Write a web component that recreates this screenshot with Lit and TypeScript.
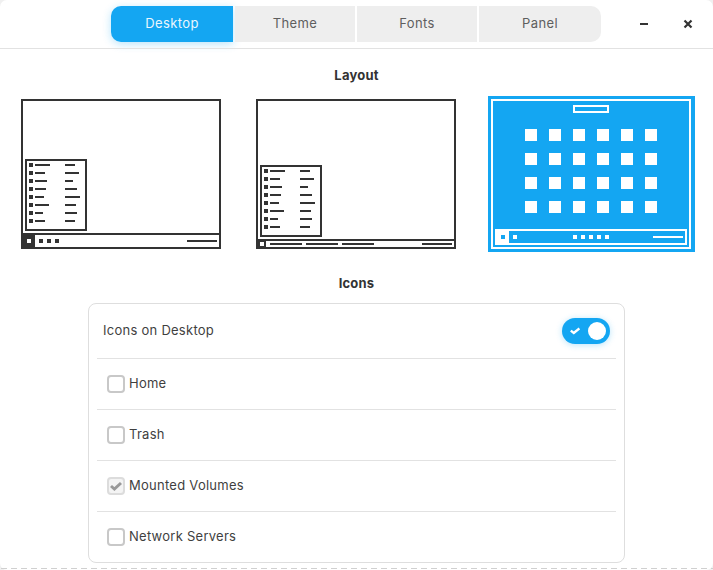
import { LitElement, html, css, svg } from "lit";
import { customElement } from "lit/decorators.js";

const W1 = [15, 10, 12, 11, 9, 14, 8, 10];
const W2 = [10, 14, 8, 12, 15, 11, 12, 10];

const menu = (x: number, y: number) => svg`
  <rect x=${x + 1} y=${y + 1} width="60" height="70" fill="none" stroke="#333" stroke-width="2"/>
  ${W1.map((w, i) => svg`
    <rect x=${x + 4} y=${y + 4 + i * 8} width="4" height="4" fill="#333"/>
    <rect x=${x + 10} y=${y + 5 + i * 8} width=${w} height="2" fill="#333"/>
    <rect x=${x + 40} y=${y + 5 + i * 8} width=${W2[i]} height="2" fill="#333"/>
  `)}`;

const frame = (c: string) => svg`<rect x="4" y="4" width="198" height="148" fill="none" stroke=${c} stroke-width="2"/>`;

const thumb1 = svg`
  ${frame("#333")}
  ${menu(7, 63)}
  <rect x="3" y="137" width="200" height="2" fill="#333"/>
  <rect x="3" y="137" width="14" height="16" fill="#333"/>
  <rect x="9" y="143" width="4" height="4" fill="#fff"/>
  ${[21, 29, 37].map((x) => svg`<rect x=${x} y="143" width="4" height="4" fill="#333"/>`)}
  <rect x="169" y="144" width="30" height="2" fill="#333"/>`;

const thumb2 = svg`
  ${frame("#333")}
  ${menu(7, 69)}
  <rect x="3" y="143" width="200" height="2" fill="#333"/>
  <rect x="3" y="143" width="10" height="10" fill="#333"/>
  <rect x="7" y="146" width="4" height="4" fill="#fff"/>
  ${[17, 53, 89].map((x) => svg`<rect x=${x} y="147" width="32" height="2" fill="#333"/>`)}
  <rect x="169" y="147" width="30" height="2" fill="#333"/>`;

const thumb3 = svg`
  ${frame("#fff")}
  <rect x="86" y="10" width="34" height="6" fill="none" stroke="#fff" stroke-width="2"/>
  ${[0, 1, 2, 3].map((r) => [0, 1, 2, 3, 4, 5].map((c) => svg`
    <rect x=${37 + c * 24} y=${33 + r * 24} width="12" height="12" fill="#fff"/>`))}
  <rect x="8" y="134" width="190" height="14" fill="none" stroke="#fff" stroke-width="2"/>
  <rect x="7" y="133" width="14" height="16" fill="#fff"/>
  <rect x="13" y="139" width="4" height="4" fill="#14a6f2"/>
  <rect x="25" y="139" width="4" height="4" fill="#fff"/>
  ${[85, 93, 101, 109, 117].map((x) => svg`<rect x=${x} y="139" width="4" height="4" fill="#fff"/>`)}
  <rect x="165" y="140" width="30" height="2" fill="#fff"/>`;

@customElement("app-root")
export class AppRoot extends LitElement {
  static styles = css`
    :host {
      display: block;
      width: 713px;
      height: 570px;
      overflow: hidden;
      background: #f0f0f0;
      font-family: Inter, "Liberation Sans", sans-serif;
      font-size: 13px;
      letter-spacing: 0.26px;
      color: #3f3f3f;
    }
    .window {
      height: 570px;
      display: flex;
      flex-direction: column;
      box-sizing: border-box;
      background: #fff;
      border-radius: 7px;
    }
    .header {
      height: 48px;
      flex: none;
      box-sizing: border-box;
      display: grid;
      grid-template-columns: 111px auto 1fr;
      align-items: start;
      padding-top: 6px;
    }
    .tabs {
      grid-column: 2;
      display: flex;
      gap: 2px;
    }
    .tab {
      width: 120px;
      height: 36px;
      box-sizing: border-box;
      padding-bottom: 2px;
      display: flex;
      align-items: center;
      justify-content: center;
      background: #eee;
      color: #5e5e5e;
      letter-spacing: 0.38px;
    }
    .tab.first {
      width: 122px;
      border-radius: 10px 0 0 10px;
    }
    .tab.last {
      width: 122px;
      border-radius: 0 10px 10px 0;
    }
    .tab.active {
      background: #14a6f2;
      color: #eaf6fe;
      box-shadow: 0 2px 8px rgba(20, 166, 242, 0.3);
    }
    .controls {
      grid-column: 3;
      display: flex;
      justify-content: flex-end;
      padding-right: 3px;
    }
    .control {
      width: 44px;
      height: 36px;
      display: flex;
      align-items: center;
      justify-content: center;
    }
    .divider {
      height: 1px;
      flex: none;
      background: #e2e2e2;
    }
    .title {
      font-weight: 700;
      font-size: 13px;
      line-height: 16px;
      text-align: center;
      color: #333;
      letter-spacing: 0.2px;
    }
    .title.layout {
      margin: 18px 0 13px;
    }
    .title.icons {
      margin: 23px 0 12px;
    }
    .thumbs {
      display: flex;
      gap: 28px;
      padding-left: 18px;
      height: 156px;
    }
    .thumb {
      display: block;
      width: 207px;
      height: 156px;
      background: #fff;
    }
    .thumb.selected {
      background: #14a6f2;
    }
    .card {
      margin-left: 88px;
      width: 537px;
      height: 260px;
      box-sizing: border-box;
      border: 1px solid #dedede;
      border-radius: 8px;
      padding: 0 8px;
    }
    .row {
      height: 50px;
      display: flex;
      align-items: center;
      gap: 4px;
      padding-left: 10px;
      border-top: 1px solid #e2e2e2;
    }
    .row.top {
      height: 54px;
      justify-content: space-between;
      padding: 0 6px;
      border-top: 0;
    }
    .label {
      margin-bottom: 2px;
    }
    .switch {
      width: 48px;
      height: 26px;
      border-radius: 13px;
      background: #14a6f2;
      box-shadow: 0 1px 6px rgba(20, 166, 242, 0.3);
      display: flex;
      align-items: center;
      justify-content: space-between;
      padding: 0 4px 0 8px;
      box-sizing: border-box;
    }
    .knob {
      width: 18px;
      height: 18px;
      border-radius: 50%;
      background: #fff;
    }
    .box {
      width: 18px;
      height: 18px;
      box-sizing: border-box;
      border: 2px solid #c8c8c8;
      border-radius: 4px;
      background: #fff;
      display: flex;
      align-items: center;
      justify-content: center;
    }
    .box.checked {
      border-color: #dcdcdc;
      background: #f4f4f4;
    }
    .foot {
      flex: none;
      margin-top: 5px;
      height: 1px;
      background: repeating-linear-gradient(90deg, transparent 0 1px, #d0d0d0 1px 7px, transparent 7px 10px);
    }
  `;

  private row(label: string, checked = false) {
    return html`<div class="row">
      <span class="box ${checked ? "checked" : ""}">
        ${checked
          ? html`<svg width="12" height="10" viewBox="0 0 12 10"><path d="M1 5l3.4 3L11 2" fill="none" stroke="#999" stroke-width="3"/></svg>`
          : ""}
      </span>
      <span class="label">${label}</span>
    </div>`;
  }

  render() {
    return html`<div class="window">
      <div class="header">
        <div class="tabs">
          <div class="tab first active">Desktop</div>
          <div class="tab">Theme</div>
          <div class="tab">Fonts</div>
          <div class="tab last">Panel</div>
        </div>
        <div class="controls">
          <div class="control">
            <svg width="8" height="8" viewBox="0 0 8 8"><path d="M0 4h8" stroke="#333" stroke-width="2"/></svg>
          </div>
          <div class="control">
            <svg width="10" height="10" viewBox="0 0 10 10"><path d="M1.5 1.5l7 7M8.5 1.5l-7 7" stroke="#333" stroke-width="2.2"/></svg>
          </div>
        </div>
      </div>
      <div class="divider"></div>
      <div class="title layout">Layout</div>
      <div class="thumbs">
        <svg class="thumb" viewBox="0 0 207 156" shape-rendering="crispEdges">${thumb1}</svg>
        <svg class="thumb" viewBox="0 0 207 156" shape-rendering="crispEdges">${thumb2}</svg>
        <svg class="thumb selected" viewBox="0 0 207 156" shape-rendering="crispEdges">${thumb3}</svg>
      </div>
      <div class="title icons">Icons</div>
      <div class="card">
        <div class="row top">
          <span class="label">Icons on Desktop</span>
          <div class="switch">
            <svg width="10" height="8" viewBox="0 0 10 8"><path d="M.8 3.6l3 2.4L9.4 1.4" fill="none" stroke="#fff" stroke-width="2.4"/></svg>
            <div class="knob"></div>
          </div>
        </div>
        ${this.row("Home")}
        ${this.row("Trash")}
        ${this.row("Mounted Volumes", true)}
        ${this.row("Network Servers")}
      </div>
      <div class="foot"></div>
    </div>`;
  }
}
